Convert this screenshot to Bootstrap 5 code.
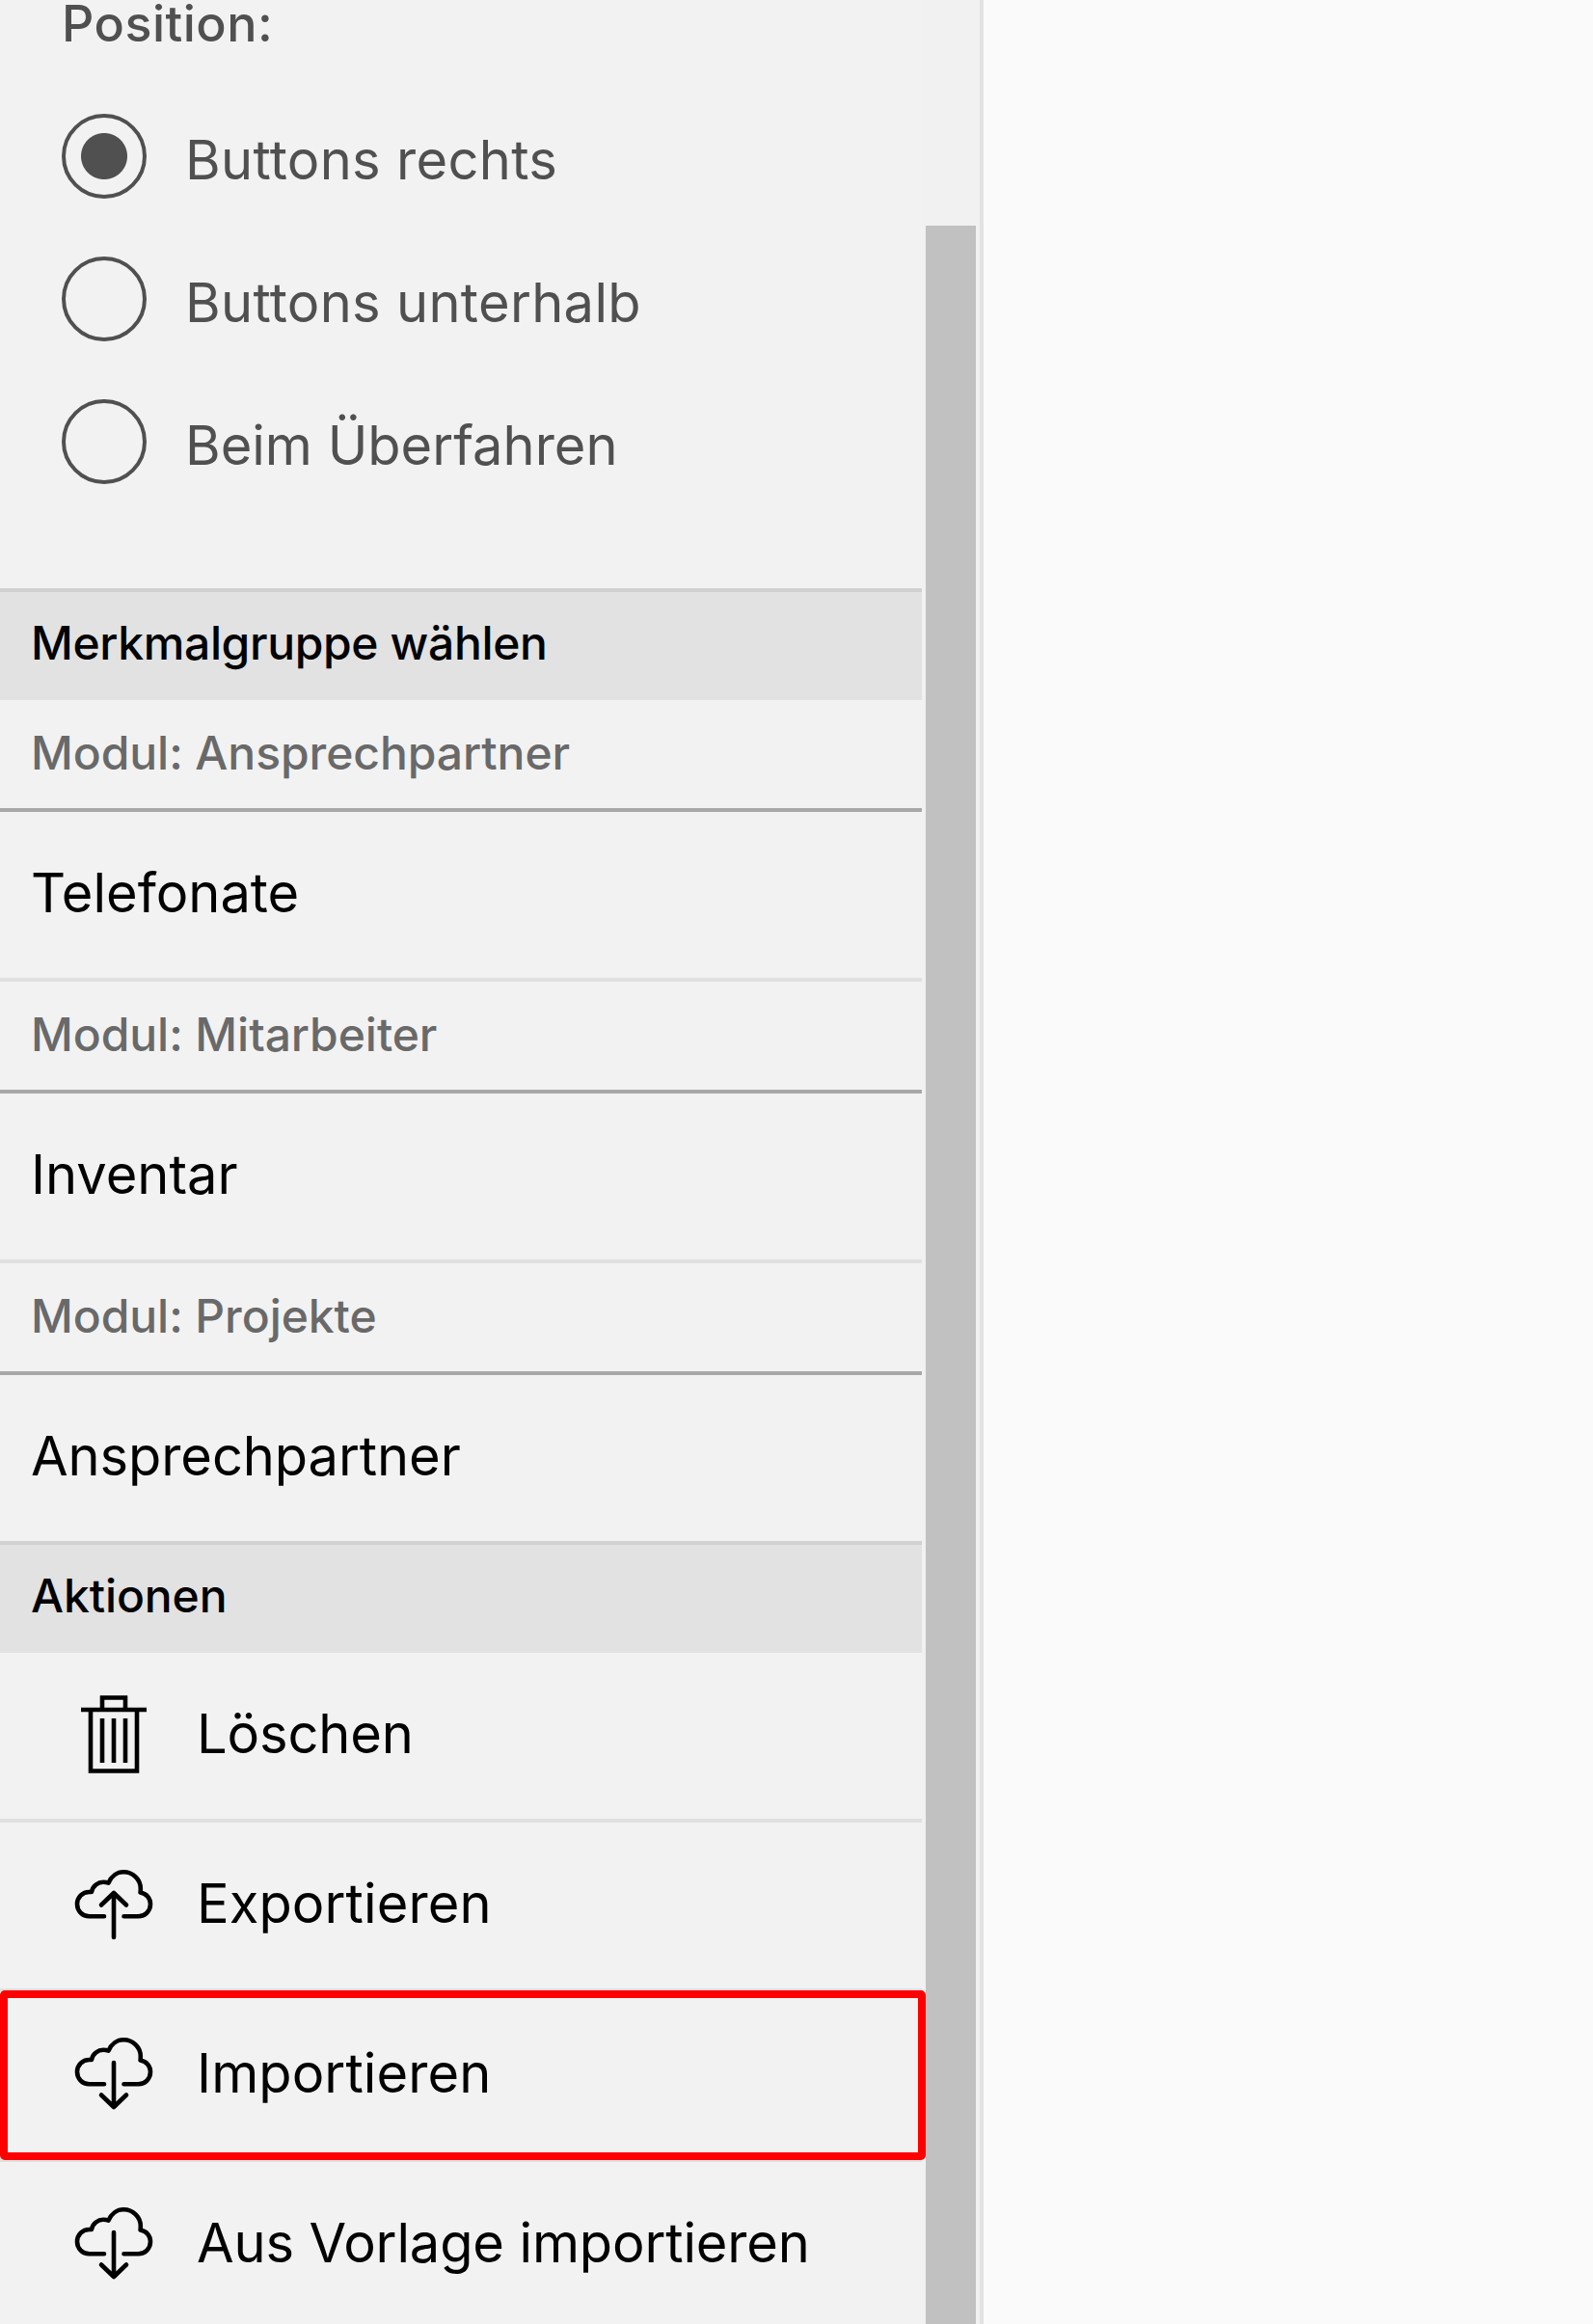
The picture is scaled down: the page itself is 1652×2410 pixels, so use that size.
<!DOCTYPE html>
<html lang="de">
<head>
<meta charset="utf-8">
<title>Merkmalgruppen</title>
<meta name="viewport" content="width=device-width, initial-scale=1">
<link href="https://cdn.jsdelivr.net/npm/bootstrap@5.3.0/dist/css/bootstrap.min.css" rel="stylesheet">
<style>
  body { font-family: Inter, "Liberation Sans", sans-serif; background: #fafafa; color: #000; height: 2410px; overflow: hidden; }
  .side-panel { width: 1020px; height: 2410px; background: #f1f1f1; border-right: 4px solid #e2e2e2; overflow: hidden; }
  .panel-body { width: 956px; background: #f2f2f2; }
  .options { height: 610px; padding-left: 64px; color: #505050; font-size: 56px; line-height: 88px; }
  .options-label { font-size: 52px; font-weight: 500; height: 118px; line-height: 50px; letter-spacing: .5px; }
  .option { height: 88px; margin-bottom: 60px; gap: 40px; }
  .option .form-check-input { width: 88px; height: 88px; border: 4px solid #505050; background: none; margin: 0; flex: none; }
  .option .form-check-input:checked { background: radial-gradient(circle, #505050 23.5px, transparent 24.5px); }
  .option label { padding-top: 4px; }
  .spaced { letter-spacing: .32px; }
  .section-head { height: 116px; border-top: 4px solid #d1d1d1; background: #e2e2e2; padding-left: 32px; font-size: 48px; font-weight: 500; line-height: 105px; letter-spacing: -.36px; }
  .section-short { letter-spacing: -.1px; }
  .module-head { height: 116px; border-bottom: 4px solid #a8a8a8; padding-left: 32px; color: #696969; font-size: 48px; font-weight: 500; line-height: 110px; letter-spacing: -.06px; }
  .entry { height: 176px; border-bottom: 4px solid #e0e0e0; padding-left: 32px; font-size: 56px; line-height: 168px; }
  .entry-last { height: 172px; border-bottom: 0; letter-spacing: -.08px; }
  .action { padding-left: 64px; gap: 32px; letter-spacing: -.14px; }
  .action span { padding-bottom: 5px; }
  .action .spaced { letter-spacing: .1px; }
  .action svg { width: 108px; height: 108px; flex: none; fill: none; stroke: #000; stroke-width: 4.6; stroke-linecap: round; stroke-linejoin: round; }
  .action svg.bin { stroke-linecap: butt; stroke-linejoin: miter; }
  .highlighted::after { content: ""; position: absolute; left: 0; top: -2px; width: 960px; height: 176px; border: 8px solid #f00; border-radius: 5px; }
  .scroll-track { width: 56px; margin-left: 4px; padding-top: 234px; }
  .scroll-thumb { width: 52px; height: 100%; background: #c1c1c1; }
</style>
<script src="https://cdn.jsdelivr.net/npm/bootstrap@5.3.0/dist/js/bootstrap.bundle.min.js"></script>
</head>
<body>
<svg class="d-none">
  <symbol id="cloud" viewBox="0 0 108 108">
    <path d="M44 65.300H28.500C21.500 65.300 16 59.700 16 52.600C16 45.500 21.500 40 28.500 40H31C32 33.500 38 29.800 43 29.800C45 29.800 47 30 48.500 30.600C51.500 23.500 57.500 19.300 64 19.300C74 19.300 81.800 27 81.800 36.500C81.800 38 81.800 39.500 81.500 40.500C88 41.500 92 46.500 92 52.600C92 59.700 86.500 65.300 79.500 65.300H64.500"/>
  </symbol>
</svg>
<aside class="side-panel d-flex">
  <div class="panel-body flex-shrink-0">
    <form class="options">
      <div class="options-label">Position:</div>
      <div class="option d-flex"><input class="form-check-input" type="radio" name="pos" id="p1" checked><label class="spaced" for="p1">Buttons rechts</label></div>
      <div class="option d-flex"><input class="form-check-input" type="radio" name="pos" id="p2"><label class="spaced" for="p2">Buttons unterhalb</label></div>
      <div class="option d-flex"><input class="form-check-input" type="radio" name="pos" id="p3"><label for="p3">Beim Überfahren</label></div>
    </form>
    <div class="section-head">Merkmalgruppe wählen</div>
    <div class="module-head">Modul: Ansprechpartner</div>
    <div class="entry">Telefonate</div>
    <div class="module-head">Modul: Mitarbeiter</div>
    <div class="entry">Inventar</div>
    <div class="module-head">Modul: Projekte</div>
    <div class="entry entry-last">Ansprechpartner</div>
    <div class="section-head section-short">Aktionen</div>
    <div class="entry action d-flex align-items-center">
      <svg class="bin" viewBox="0 0 108 108"><path d="M20 27H88M30 27V90.500H78V27M42 27V14.500H66V27M42 36V82M54 36V82M66 36V82"/></svg>
      <span>Löschen</span>
    </div>
    <div class="entry action d-flex align-items-center">
      <svg viewBox="0 0 108 108"><use href="#cloud"/><path d="M54 87V41M41 53.500L54 41L67 53.500"/></svg>
      <span class="spaced">Exportieren</span>
    </div>
    <div class="entry action highlighted position-relative d-flex align-items-center">
      <svg viewBox="0 0 108 108"><use href="#cloud" y="-2"/><path d="M54 41V87M41 74.500L54 87L67 74.500"/></svg>
      <span class="spaced">Importieren</span>
    </div>
    <div class="entry action d-flex align-items-center">
      <svg viewBox="0 0 108 108"><use href="#cloud" y="-2"/><path d="M54 41V87M41 74.500L54 87L67 74.500"/></svg>
      <span>Aus Vorlage importieren</span>
    </div>
  </div>
  <div class="scroll-track flex-shrink-0"><div class="scroll-thumb"></div></div>
</aside>
</body>
</html>
